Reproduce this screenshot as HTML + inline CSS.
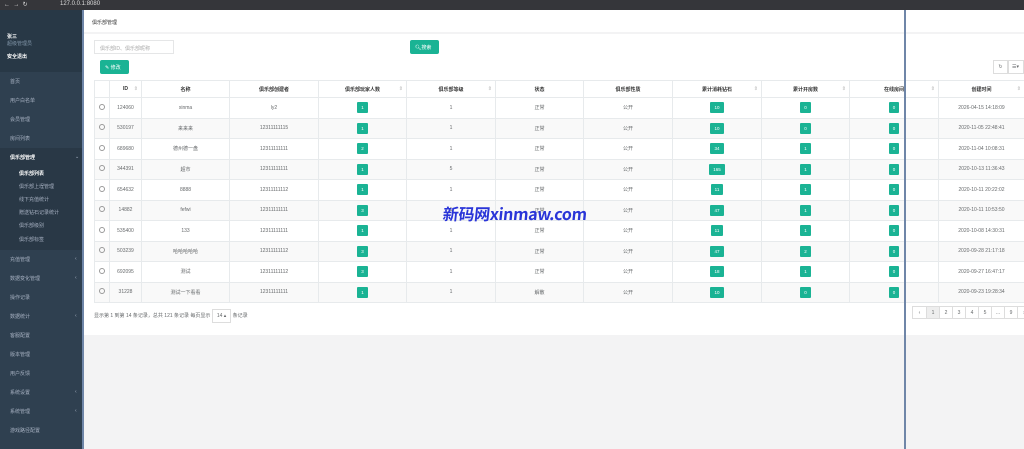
<!DOCTYPE html>
<html><head><meta charset="utf-8"><style>
*{box-sizing:border-box;margin:0;padding:0}
body{width:1024px;height:449px;overflow:hidden;position:relative;background:#f3f3f4;font-family:"Liberation Sans","Noto Sans CJK SC",sans-serif;font-size:5px;color:#676a6c}
.top{position:absolute;left:0;top:0;width:1024px;height:10px;background:#35363a;color:#ddd;font-size:6px}
.side{position:absolute;left:0;top:10px;width:82px;height:439px;background:#2f4050}
.side .hd{height:62px;background:#283846;padding:23px 0 0 7px;color:#fff}
.side div.it{position:absolute;left:10px;color:#a7b1c2;font-size:5px}
.side .ar{position:absolute;left:75px;color:#a7b1c2;font-size:5px}
.vl{position:absolute;top:10px;width:2px;height:439px;background:#6f86a8}
.main{position:absolute;left:84px;top:10px;width:940px;height:325px;background:#fff}
.gray{position:absolute;left:84px;top:335px;width:940px;height:114px;background:#f3f3f4}
table{position:absolute;left:94px;top:80px;border-collapse:collapse;table-layout:fixed;width:930px}
td,th{border:1px solid #e7eaec;text-align:center;height:20.5px;padding:0;font-weight:normal;font-size:5px;color:#676a6c;white-space:nowrap;overflow:hidden;position:relative}
th{height:17px;color:#333;font-weight:bold;background:#fff}
tr:nth-child(odd) td{background:#f9f9f9}
.b{display:inline-block;background:#1ab394;color:#fff;padding:3px 4px;line-height:5px;border-radius:1px;min-width:10px;font-size:4.5px}
.rd{display:inline-block;width:6px;height:6px;border:1px solid #999;border-radius:50%}
.s{position:absolute;right:3px;top:5px;color:#ccc;font-size:5px}
</style></head><body>
<div class="top"><span style="position:absolute;left:4px;top:1px">←&nbsp;&nbsp;→&nbsp;&nbsp;↻</span><span style="position:absolute;left:60px;top:1px">127.0.0.1:8080</span></div>
<div class="side"><div class="hd"><div style="font-weight:bold;font-size:5px">张三</div><div style="color:#8095a8;font-size:5px">超级管理员</div><div style="margin-top:6px;font-weight:bold;font-size:5px">安全退出</div></div>
<div style="position:absolute;left:0;top:138px;width:82px;height:102px;background:#293846"></div>
<div class="it" style="top:68px">首页</div><div class="it" style="top:87px">用户白名单</div><div class="it" style="top:106px">会员管理</div><div class="it" style="top:125px">房间列表</div>
<div class="it" style="top:144px;color:#fff;font-weight:bold">俱乐部管理</div><div class="ar" style="top:144px">⌄</div>
<div class="it" style="top:160px;left:19px;color:#fff;font-weight:bold">俱乐部列表</div>
<div class="it" style="top:173px;left:19px">俱乐部上埕管理</div><div class="it" style="top:186px;left:19px">线下充值统计</div><div class="it" style="top:199px;left:19px">赠送钻石记录统计</div><div class="it" style="top:212px;left:19px">俱乐部级别</div><div class="it" style="top:226px;left:19px">俱乐部标签</div>
<div class="it" style="top:246px">充值管理</div><div class="ar" style="top:246px">‹</div>
<div class="it" style="top:265px">数据变化管理</div><div class="ar" style="top:265px">‹</div>
<div class="it" style="top:284px">操作记录</div>
<div class="it" style="top:303px">数据统计</div><div class="ar" style="top:303px">‹</div>
<div class="it" style="top:322px">客服配置</div><div class="it" style="top:341px">版本管理</div><div class="it" style="top:360px">用户反馈</div>
<div class="it" style="top:379px">系统设置</div><div class="ar" style="top:379px">‹</div>
<div class="it" style="top:398px">系统管理</div><div class="ar" style="top:398px">‹</div>
<div class="it" style="top:417px">游戏路径配置</div>
</div>
<div class="main">
<div style="position:absolute;left:8px;top:9px;color:#333;font-size:5px">俱乐部管理</div>
<div style="position:absolute;left:0;top:22px;width:940px;height:2px;background:#f3f3f4"></div>
<div style="position:absolute;left:10px;top:30px;width:80px;height:14px;border:1px solid #e5e6e7;color:#aaa;padding:4px 5px;font-size:5px">俱乐部ID、俱乐部昵称</div>
<div style="position:absolute;left:326px;top:30px;width:29px;height:14px;background:#1ab394;color:#fff;border-radius:2px;padding:4px 5px;font-size:5px">🔍︎搜索</div>
<div style="position:absolute;left:16px;top:50px;width:29px;height:14px;background:#1ab394;color:#fff;border-radius:2px;padding:4px 5px;font-size:5px">✎ 修改</div>
<div style="position:absolute;left:909px;top:50px;width:15px;height:14px;border:1px solid #ddd;text-align:center;padding-top:3px">↻</div>
<div style="position:absolute;left:924px;top:50px;width:16px;height:14px;border:1px solid #ddd;padding:3px 3px">☰▾</div>
<div style="position:absolute;left:10px;top:299px;font-size:5px">显示第 1 到第 14 条记录，总共 121 条记录 每页显示 <span style="display:inline-block;border:1px solid #ddd;padding:3px 4px">14 ▴</span> 条记录</div>
<div style="position:absolute;left:828px;top:296px;height:13px;border:1px solid #ddd;display:flex;font-size:5px">
<span style="width:13px;text-align:center;padding-top:3px">‹</span><span style="width:13px;text-align:center;padding-top:3px;background:#eee;border-left:1px solid #ddd">1</span><span style="width:13px;text-align:center;padding-top:3px;border-left:1px solid #ddd">2</span><span style="width:13px;text-align:center;padding-top:3px;border-left:1px solid #ddd">3</span><span style="width:13px;text-align:center;padding-top:3px;border-left:1px solid #ddd">4</span><span style="width:13px;text-align:center;padding-top:3px;border-left:1px solid #ddd">5</span><span style="width:13px;text-align:center;padding-top:3px;border-left:1px solid #ddd">…</span><span style="width:13px;text-align:center;padding-top:3px;border-left:1px solid #ddd">9</span><span style="width:13px;text-align:center;padding-top:3px;border-left:1px solid #ddd">›</span></div>
</div>
<div class="gray"></div>
<table>
<colgroup><col style="width:15px"><col style="width:32px"><col style="width:88px"><col style="width:89px"><col style="width:88px"><col style="width:89px"><col style="width:88px"><col style="width:89px"><col style="width:89px"><col style="width:88px"><col style="width:89px"><col style="width:86px"></colgroup>
<tr><th></th><th>ID<span class="s">⇕</span></th><th>名称</th><th>俱乐部创建者</th><th>俱乐部玩家人数<span class="s">⇕</span></th><th>俱乐部等级<span class="s">⇕</span></th><th>状态</th><th>俱乐部性质</th><th>累计消耗钻石<span class="s">⇕</span></th><th>累计开房数<span class="s">⇕</span></th><th>在线房间<span class="s">⇕</span></th><th>创建时间<span class="s">⇕</span></th></tr>
<tr><td><span class="rd"></span></td><td>124060</td><td>xinma</td><td>ly2</td><td><span class="b">1</span></td><td>1</td><td>正常</td><td>公开</td><td><span class="b">10</span></td><td><span class="b">0</span></td><td><span class="b">0</span></td><td>2026-04-15 14:18:09</td></tr>
<tr><td><span class="rd"></span></td><td>530197</td><td>来来来</td><td>12311111115</td><td><span class="b">1</span></td><td>1</td><td>正常</td><td>公开</td><td><span class="b">10</span></td><td><span class="b">0</span></td><td><span class="b">0</span></td><td>2020-11-05 22:48:41</td></tr>
<tr><td><span class="rd"></span></td><td>689680</td><td>德州德一盘</td><td>12311111111</td><td><span class="b">2</span></td><td>1</td><td>正常</td><td>公开</td><td><span class="b">34</span></td><td><span class="b">1</span></td><td><span class="b">0</span></td><td>2020-11-04 10:08:31</td></tr>
<tr><td><span class="rd"></span></td><td>344391</td><td>超市</td><td>12311111111</td><td><span class="b">1</span></td><td>5</td><td>正常</td><td>公开</td><td><span class="b">165</span></td><td><span class="b">1</span></td><td><span class="b">0</span></td><td>2020-10-13 11:36:43</td></tr>
<tr><td><span class="rd"></span></td><td>654632</td><td>8888</td><td>12311111112</td><td><span class="b">1</span></td><td>1</td><td>正常</td><td>公开</td><td><span class="b">11</span></td><td><span class="b">1</span></td><td><span class="b">0</span></td><td>2020-10-11 20:22:02</td></tr>
<tr><td><span class="rd"></span></td><td>14882</td><td>fefwi</td><td>12311111111</td><td><span class="b">3</span></td><td>1</td><td>正常</td><td>公开</td><td><span class="b">47</span></td><td><span class="b">1</span></td><td><span class="b">0</span></td><td>2020-10-11 10:53:50</td></tr>
<tr><td><span class="rd"></span></td><td>535400</td><td>133</td><td>12311111111</td><td><span class="b">1</span></td><td>1</td><td>正常</td><td>公开</td><td><span class="b">11</span></td><td><span class="b">1</span></td><td><span class="b">0</span></td><td>2020-10-08 14:30:31</td></tr>
<tr><td><span class="rd"></span></td><td>503239</td><td>哈哈哈哈哈</td><td>12311111112</td><td><span class="b">3</span></td><td>1</td><td>正常</td><td>公开</td><td><span class="b">47</span></td><td><span class="b">2</span></td><td><span class="b">0</span></td><td>2020-09-28 21:17:18</td></tr>
<tr><td><span class="rd"></span></td><td>692095</td><td>测试</td><td>12311111112</td><td><span class="b">3</span></td><td>1</td><td>正常</td><td>公开</td><td><span class="b">18</span></td><td><span class="b">1</span></td><td><span class="b">0</span></td><td>2020-09-27 16:47:17</td></tr>
<tr><td><span class="rd"></span></td><td>31228</td><td>测试一下看看</td><td>12311111111</td><td><span class="b">1</span></td><td>1</td><td>解散</td><td>公开</td><td><span class="b">10</span></td><td><span class="b">0</span></td><td><span class="b">0</span></td><td>2020-09-23 19:28:34</td></tr>
</table>
<div class="vl" style="left:82px"></div>
<div class="vl" style="left:904px"></div>
<div style="position:absolute;left:443px;top:203px;font-size:16px;color:#2a35d8;font-family:'Noto Sans CJK SC','DejaVu Sans',sans-serif;font-weight:bold;line-height:20px;white-space:nowrap;transform:skewX(-6deg);letter-spacing:-0.3px">新码网xinmaw.com</div>
</body></html>
